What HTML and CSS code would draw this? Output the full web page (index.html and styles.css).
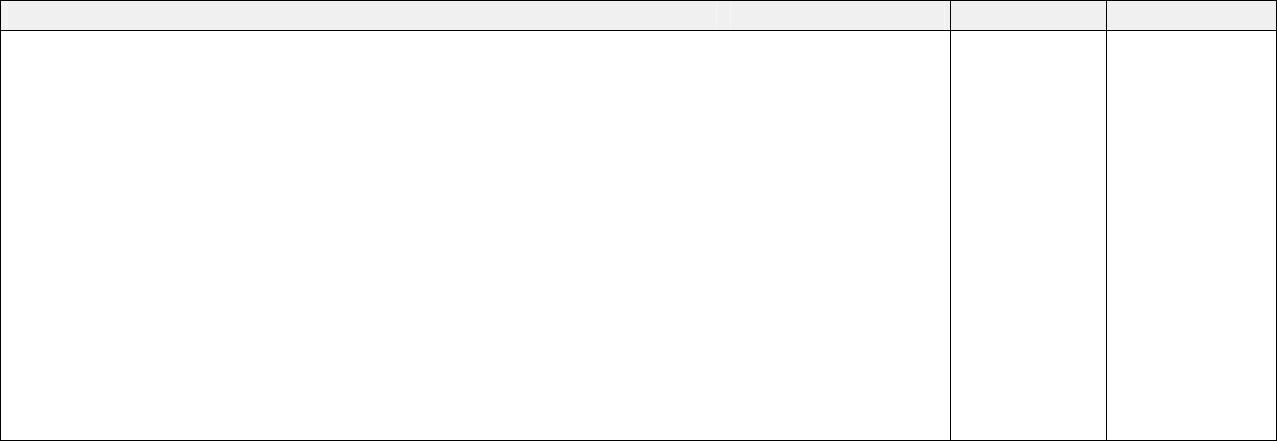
FILE: index.html
```html
<!DOCTYPE html>
<html>
<head>
<meta charset="utf-8">
<link rel="stylesheet" href="styles.css">
</head>
<body>
<div class="grid">
  <div class="head head-main">
    <span class="grip"></span>
    <span class="fill w708"></span>
    <span class="sep"></span>
    <span class="fill w13"></span>
    <span class="sep"></span>
    <span class="fill w213"></span>
    <span class="sep"></span>
    <span class="fill"></span>
  </div>
  <div class="head col-b"></div>
  <div class="head col-b"></div>
  <div class="cell"></div>
  <div class="cell col-b"></div>
  <div class="cell col-b"></div>
</div>
</body>
</html>
```
FILE: styles.css
```css
html, body {
  margin: 0;
  padding: 0;
  background: #ffffff;
  font-family: "Liberation Sans", Arial, sans-serif;
}

.grid {
  width: 1277px;
  height: 441px;
  box-sizing: border-box;
  border: 1px solid #000000;
  display: grid;
  grid-template-columns: 949px 156px 170px;
  grid-template-rows: 30px 1fr;
  background: #ffffff;
}

.head {
  background: #f0f0f0;
  border-bottom: 1px solid #000000;
}

.head-main {
  display: flex;
  padding-left: 1px;
}

.grip {
  width: 6px;
  background: #f4f4f4;
}

.fill {
  flex: 1;
}

.w708 { flex: 0 0 708px; }
.w13 { flex: 0 0 13px; }
.w213 { flex: 0 0 213px; }

.sep {
  width: 1px;
  background: #f6f6f6;
}

.col-b {
  border-left: 1px solid #000000;
}

.cell {
  background: #ffffff;
}
```
